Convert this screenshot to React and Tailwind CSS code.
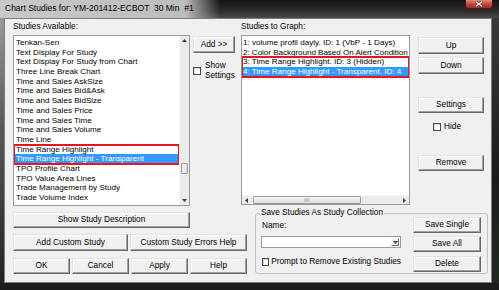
import React from "react";

const topItems = [
  "Tenkan-Sen",
  "Text Display For Study",
  "Text Display For Study from Chart",
  "Three Line Break Chart",
  "Time and Sales AskSize",
  "Time and Sales Bid&Ask",
  "Time and Sales BidSize",
  "Time and Sales Price",
  "Time and Sales Time",
  "Time and Sales Volume",
  "Time Line",
];

const bottomItems = [
  "TPO Profile Chart",
  "TPO Value Area Lines",
  "Trade Management by Study",
  "Trade Volume Index",
  "Trading Signal Profile",
];

const Btn = ({ className = "", children }) => (
  <button
    type="button"
    className={`flex items-center justify-center bg-[#f0f0f0] text-black border border-t-[#e3e3e3] border-l-[#e3e3e3] border-r-[#696969] border-b-[#696969] shadow-[inset_-1px_-1px_0_#a0a0a0,inset_1px_1px_0_#ffffff] ${className}`}
  >
    {children}
  </button>
);

const Check = ({ className = "" }) => (
  <span className={`block w-[8px] h-[8px] border border-[#4a4a4a] bg-white shadow-[inset_1px_1px_0_#d8d8d8] ${className}`} />
);

const Arrow = ({ dir }) => {
  const d = {
    up: "M0 3 L2.5 0 L5 3 Z",
    down: "M0 0 L5 0 L2.5 3 Z",
    left: "M3 0 L3 5 L0 2.5 Z",
    right: "M0 0 L3 2.5 L0 5 Z",
  }[dir];
  const vert = dir === "up" || dir === "down";
  return (
    <svg width={vert ? 5 : 3} height={vert ? 3 : 5} viewBox={vert ? "0 0 5 3" : "0 0 3 5"}>
      <path d={d} fill="#3c3c3c" />
    </svg>
  );
};

// list row, fixed height so the rows line up with the reference
const Row = ({ children, selected, className = "" }) => (
  <div
    className={`h-[9.7px] leading-[9.7px] text-[8.1px] whitespace-nowrap overflow-hidden ${selected ? "bg-[#3399ff] text-white" : "text-black"} ${className}`}
  >
    {children}
  </div>
);

export default function App() {
  return (
    <div className="w-[499px] h-[290px] flex flex-col bg-[#202020] overflow-hidden font-['Liberation_Sans',Arial,sans-serif] text-[8.25px] leading-[10px] text-black">
      {/* title bar */}
      <div className="h-[18px] flex items-start justify-between bg-[linear-gradient(to_right,#c9c9c9_0px,#bdbdbd_185px,rgba(40,40,40,0)_220px),linear-gradient(to_bottom,#151515,#2c2c2c_60%,#4a4a4a)]">
        <div className="pl-[5px] text-[8.5px] leading-[16px] whitespace-pre text-black">
          Chart Studies for: YM-201412-ECBOT  30 Min  #1
        </div>
        <div className="mr-[6px] w-[28px] h-[9px] flex items-center justify-center rounded-b-[3px] border border-t-0 border-[#4a1712] bg-[linear-gradient(to_bottom,#d98a7c,#c2463a_55%,#a8281e)]">
          <svg width="8" height="6" viewBox="0 0 8 6">
            <path d="M1 0.8 L7 5.2 M7 0.8 L1 5.2" stroke="#5a1a14" strokeWidth="2.6" />
            <path d="M1 0.8 L7 5.2 M7 0.8 L1 5.2" stroke="#ffffff" strokeWidth="1.4" />
          </svg>
        </div>
      </div>

      <div className="flex flex-1">
        <div className="w-[4px] bg-[linear-gradient(to_bottom,#9a9a9a,#5a5a5a_40%,#222222)]" />

        {/* client area */}
        <div className="w-[488px] h-[265px] border border-[#7c7c7c] bg-[#f0f0f0] pl-[8px] pt-[3px] flex flex-col">
          {/* top section */}
          <div className="flex items-start">
            {/* available list */}
            <div className="w-[177px] flex flex-col">
              <div className="h-[13px]">Studies Available:</div>
              <div className="h-[171px] flex bg-white border border-[#9a9a9a]">
                <div className="flex-1 pt-[2px] overflow-hidden">
                  {topItems.map((t) => (
                    <Row key={t} className="pl-[2px]">{t}</Row>
                  ))}
                  <div className="outline-2 outline-[#e8141e] -outline-offset-1">
                    <Row className="pl-[2px]">Time Range Highlight</Row>
                    <Row selected className="pl-[2px]">Time Range Highlight - Transparent</Row>
                  </div>
                  {bottomItems.map((t) => (
                    <Row key={t} className="pl-[2px]">{t}</Row>
                  ))}
                </div>
                <div className="w-[10px] flex flex-col bg-[#ebebeb] border-l border-[#f7f7f7]">
                  <div className="h-[9px] flex items-center justify-center">
                    <Arrow dir="up" />
                  </div>
                  <div className="h-[118px]" />
                  <div className="mx-[1px] h-[11px] rounded-[1px] border border-[#9c9c9c] bg-[linear-gradient(to_right,#f4f4f4,#e2e2e2)]" />
                  <div className="flex-1" />
                  <div className="h-[9px] flex items-center justify-center">
                    <Arrow dir="down" />
                  </div>
                </div>
              </div>
            </div>

            {/* middle */}
            <div className="ml-[3px] w-[42px] pt-[14px] flex flex-col">
              <Btn className="h-[17px] w-[42px]">Add &gt;&gt;</Btn>
              <div className="mt-[8px] flex items-start">
                <Check className="mt-[6px]" />
                <div className="ml-[4px]">
                  <div>Show</div>
                  <div>Settings</div>
                </div>
              </div>
            </div>

            {/* graph list */}
            <div className="ml-[6px] w-[169px] flex flex-col">
              <div className="h-[13px]">Studies to Graph:</div>
              <div className="h-[170px] flex flex-col bg-white border border-[#9a9a9a]">
                <div className="flex-1 pt-[2px] overflow-hidden">
                  <Row className="pl-[1px]">1: volume profil dayly. ID: 1 (VbP - 1 Days)</Row>
                  <Row className="pl-[1px] tracking-[-0.05px]">2: Color Background Based On Alert Condition</Row>
                  <div className="outline-2 outline-[#e8141e] -outline-offset-1">
                    <Row className="pl-[1px]">3: Time Range Highlight. ID: 3 (Hidden)</Row>
                    <Row selected className="pl-[1px]">4: Time Range Highlight - Transparent. ID: 4</Row>
                  </div>
                </div>
                <div className="h-[9px] flex items-center bg-[#ebebeb] border-t border-[#f7f7f7]">
                  <div className="w-[9px] flex items-center justify-center">
                    <Arrow dir="left" />
                  </div>
                  <div className="ml-[2px] w-[108px] h-[8px] rounded-[1px] border border-[#9c9c9c] bg-[linear-gradient(to_bottom,#f4f4f4,#e0e0e0)] flex items-center justify-center">
                    <span className="text-[5px] leading-[5px] tracking-[0.5px] text-[#6a6a6a]">III</span>
                  </div>
                  <div className="flex-1" />
                  <div className="w-[9px] flex items-center justify-center">
                    <Arrow dir="right" />
                  </div>
                </div>
              </div>
            </div>

            {/* right buttons */}
            <div className="ml-[8px] w-[66px] pt-[15px] flex flex-col">
              <Btn className="h-[17px]">Up</Btn>
              <Btn className="h-[17px] mt-[3px]">Down</Btn>
              <Btn className="h-[16px] mt-[23px]">Settings</Btn>
              <div className="mt-[9px] pl-[15px] flex items-center h-[10px]">
                <Check />
                <span className="ml-[3px]">Hide</span>
              </div>
              <Btn className="h-[16px] mt-[23px]">Remove</Btn>
            </div>
          </div>

          {/* bottom section */}
          <div className="flex items-start">
            <div className="w-[234px] flex flex-col">
              <Btn className="mt-[6px] w-[177px] h-[16px]">Show Study Description</Btn>
              <div className="mt-[6px] flex gap-[2px]">
                <Btn className="w-[115px] h-[17px]">Add Custom Study</Btn>
                <Btn className="w-[117px] h-[17px]">Custom Study Errors Help</Btn>
              </div>
              <div className="mt-[7px] flex gap-[2px]">
                <Btn className="w-[57px] h-[16px]">OK</Btn>
                <Btn className="w-[57px] h-[16px]">Cancel</Btn>
                <Btn className="w-[57px] h-[16px]">Apply</Btn>
                <Btn className="w-[57px] h-[16px]">Help</Btn>
              </div>
            </div>

            <fieldset className="ml-[8px] mt-[3px] w-[233px] border border-[#c2c2c2] rounded-[3px] pl-[5px] pr-[6px] pb-[1px]">
              <legend className="-ml-[1px] px-[1px] leading-[8px]">Save Studies As Study Collection</legend>
              <div className="flex">
                <div className="w-[140px] flex flex-col">
                  <div className="mt-[4px] pl-[1px]">Name:</div>
                  <div className="mt-[5px] h-[12px] flex justify-end bg-white border border-[#9a9a9a] p-[1px]">
                    <div className="w-[8px] flex items-center justify-center bg-[#f0f0f0] border border-t-[#f8f8f8] border-l-[#f8f8f8] border-r-[#696969] border-b-[#696969]">
                      <Arrow dir="down" />
                    </div>
                  </div>
                  <div className="mt-[9px] h-[10px] flex items-center pl-[1px]">
                    <Check />
                    <span className="ml-[2px] whitespace-nowrap">Prompt to Remove Existing Studies</span>
                  </div>
                </div>
                <div className="ml-[12px] w-[68px] flex flex-col">
                  <Btn className="h-[16px]">Save Single</Btn>
                  <Btn className="h-[16px] mt-[3px]">Save All</Btn>
                  <Btn className="h-[16px] mt-[4px]">Delete</Btn>
                </div>
              </div>
            </fieldset>
          </div>
        </div>

        <div className="w-[7px] bg-[linear-gradient(to_bottom,#3a3a3a,#1c1c1c_60%,#1f2a1f)]" />
      </div>
      <div className="h-[7px] bg-[#1c1c1c]" />
    </div>
  );
}
